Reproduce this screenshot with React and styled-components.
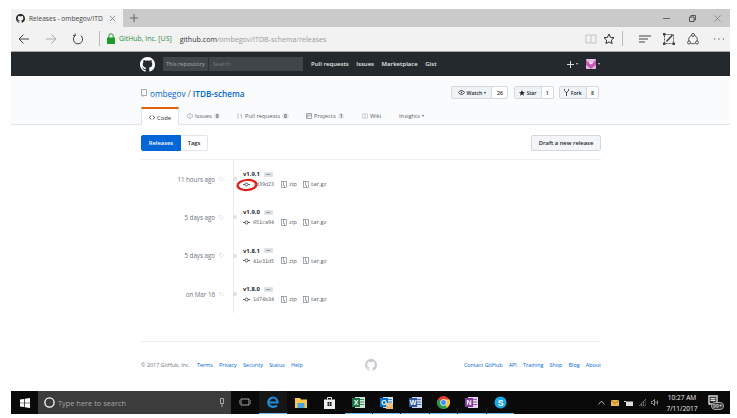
import React from 'react'
import styled, { createGlobalStyle } from 'styled-components'

const Global = createGlobalStyle`
  html, body { margin: 0; padding: 0; background: #fff; }
  body { font-family: "Open Sans", "Noto Sans", sans-serif; color: #24292e; }
  * { box-sizing: border-box; }
`

const Page = styled.div`
  width: 737px;
  height: 418px;
  padding: 9px 7px 4px 11px;
  overflow: hidden;
`
const Win = styled.div`
  height: 405px;
  display: flex;
  flex-direction: column;
`

// browser chrome
const TabStrip = styled.div`
  height: 18px;
  background: #cacaca;
  display: flex;
  align-items: center;
  color: #555;
`
const ActiveTab = styled.div`
  width: 112px;
  height: 18px;
  background: #f2f2f2;
  display: flex;
  align-items: center;
  padding-left: 5px;
  font-size: 6.6px;
  color: #444;
`
const TabTitle = styled.span`
  margin: 0 4px;
  width: 76px;
  overflow: hidden;
  white-space: nowrap;
`
const NewTab = styled.span`
  margin-left: 7px;
  display: flex;
`
const WinButtons = styled.div`
  margin-left: auto;
  width: 67px;
  display: flex;
  justify-content: space-between;
  align-items: center;
  padding-right: 9px;
`
const AddressBar = styled.div`
  height: 25px;
  background: #f2f2f2;
  border-bottom: 1px solid #a9a9a9;
  display: flex;
  align-items: center;
  padding: 0 0 1px 7px;
`
const NavBtn = styled.span`
  display: flex;
  width: 12px;
  margin-right: ${p => p.$gap}px;
`
const Sep = styled.span`
  width: 1px;
  height: 15px;
  background: #bbb;
  margin: ${p => p.$m};
`
const Identity = styled.span`
  font-size: 6.9px;
  color: #2e8b3a;
  margin-left: 4px;
  white-space: nowrap;
`
const Url = styled.span`
  font-size: 7.1px;
  color: #9a9a9a;
  margin-left: 8px;
  white-space: nowrap;
  b { font-weight: 400; color: #333; }
`
const Tools = styled.div`
  margin-left: auto;
  display: flex;
  align-items: center;
  padding-right: 5px;
`
const ToolSlot = styled.span`
  display: flex;
  justify-content: center;
  width: ${p => p.$w}px;
  margin-left: ${p => p.$ml || 0}px;
`

// github header
const TopNav = styled.div`
  height: 24px;
  background: #24292e;
  display: flex;
  align-items: center;
  padding: 0 130px 0 129px;
`
const SearchBox = styled.div`
  width: 140px;
  height: 14px;
  margin-left: 8px;
  background: #40454a;
  border-radius: 1px;
  display: flex;
  align-items: center;
  font-size: 5.6px;
  color: #a9adb1;
`
const Scope = styled.span`
  width: 46px;
  height: 100%;
  padding-left: 3px;
  display: flex;
  align-items: center;
  border-right: 1px solid #2b3035;
  white-space: nowrap;
`
const SearchHint = styled.span`
  margin-left: 4px;
  color: #777c80;
`
const NavLinks = styled.div`
  margin-left: 8px;
  display: flex;
  gap: 7.5px;
  font-size: 6px;
  font-weight: 600;
  color: #e4e6e8;
  white-space: nowrap;
`
const NavRight = styled.div`
  margin-left: auto;
  display: flex;
  align-items: center;
  color: #d8dadc;
`
const Caret = styled.span`
  width: 0;
  height: 0;
  margin-left: ${p => p.$ml ?? 2}px;
  border: 1.5px solid transparent;
  border-top: 2px solid currentColor;
  border-bottom: 0;
  display: inline-block;
  vertical-align: middle;
`
const Avatar = styled.span`
  margin-left: 8px;
  display: flex;
`

const RepoHead = styled.div`
  height: 49px;
  background: #fafbfc;
  border-bottom: 1px solid #e1e4e8;
  padding: 10px 130px 0;
  display: flex;
  flex-direction: column;
`
const RepoRow = styled.div`
  height: 13px;
  display: flex;
  align-items: center;
`
const RepoName = styled.div`
  margin: 1px 0 0 3px;
  font-size: 8.2px;
  color: #586069;
  white-space: nowrap;
  a { color: #0366d6; }
  strong { color: #0366d6; font-weight: 600; }
`
const Actions = styled.div`
  margin: 0 1px 0 auto;
  display: flex;
  gap: 5.3px;
`
const Action = styled.div`
  display: flex;
  height: 13px;
  font-size: 5.2px;
  border: 1px solid #d5d8dc;
  border-radius: 2px;
  background: #fff;
  color: #24292e;
`
const ActionMain = styled.span`
  width: ${p => p.$w}px;
  background: #eff3f6;
  border-right: 1px solid #d5d8dc;
  display: flex;
  align-items: center;
  justify-content: center;
  gap: 1.5px;
  font-weight: 600;
`
const ActionCount = styled.span`
  width: ${p => p.$w}px;
  display: flex;
  align-items: center;
  justify-content: center;
  font-weight: 600;
`
const Tabs = styled.div`
  margin-top: 8px;
  display: flex;
  height: 18px;
`
const Tab = styled.div`
  width: ${p => p.$w}px;
  margin-left: ${p => p.$ml || 0}px;
  display: flex;
  align-items: center;
  justify-content: ${p => (p.$active ? 'center' : 'flex-start')};
  gap: 2px;
  font-size: 5.8px;
  white-space: nowrap;
  color: ${p => (p.$active ? '#24292e' : '#586069')};
  ${p =>
    p.$active &&
    `background:#fff;border-top:2px solid #e36209;border-left:1px solid #e1e4e8;border-right:1px solid #e1e4e8;height:19px;`}
`
const Count = styled.span`
  background: #e6e8ea;
  border-radius: 5px;
  padding: 0 2px;
  font-size: 4.8px;
  font-weight: 600;
  line-height: 6px;
  color: #444;
`

// releases
const Main = styled.div`
  flex: 1;
  padding: 10px 129px 0 130px;
  background: #fff;
  display: flex;
  flex-direction: column;
  position: relative;
`
const SubNav = styled.div`
  height: 25px;
  border-bottom: 1px solid #eaecef;
  display: flex;
  align-items: flex-start;
`
const Seg = styled.span`
  height: 16px;
  width: ${p => p.$w}px;
  display: flex;
  align-items: center;
  justify-content: center;
  font-size: 5.8px;
  font-weight: 600;
  border-radius: ${p => p.$r};
  color: ${p => (p.$on ? '#fff' : '#24292e')};
  background: ${p => (p.$on ? '#0366d6' : '#fff')};
  border: 1px solid ${p => (p.$on ? '#0366d6' : '#e1e4e8')};
  ${p => !p.$on && 'border-left:0;'}
`
const Draft = styled.span`
  margin-left: auto;
  width: 70px;
  height: 16px;
  display: flex;
  align-items: center;
  justify-content: center;
  font-size: 5.8px;
  font-weight: 600;
  background: #f3f5f7;
  border: 1px solid #d5d8dc;
  border-radius: 2px;
`
const Timeline = styled.div`
  width: 200px;
  height: 153px;
  padding-top: 9.5px;
  display: flex;
  flex-direction: column;
  background: linear-gradient(#e9ebed, #e9ebed) no-repeat 92px 0 / 1px 100%;
`
const Release = styled.div`
  flex: 0 0 38.4px;
  display: grid;
  grid-template-columns: 74px 12px 16px 1fr;
  align-items: start;
`
const When = styled.span`
  margin-top: 5px;
  text-align: right;
  font-size: 6.2px;
  color: #6a737d;
  white-space: nowrap;
`
const TagMark = styled.span`
  margin: 7px 0 0 4px;
  display: flex;
`
const Dot = styled.span`
  margin: 7.5px 0 0 6px;
  width: 4px;
  height: 4px;
  border-radius: 50%;
  background: #dfe2e5;
`
const Info = styled.div`
  display: flex;
  flex-direction: column;
`
const Version = styled.div`
  display: flex;
  align-items: center;
  gap: 4px;
  height: 9px;
  font-size: 5.9px;
  font-weight: 700;
  color: #24292e;
`
const More = styled.span`
  width: 9px;
  height: 5px;
  background: #dfe2e5;
  border-radius: 1px;
  font-size: 5px;
  line-height: 2px;
  text-align: center;
  color: #444d56;
`
const Meta = styled.div`
  display: flex;
  align-items: center;
  margin-top: 1.5px;
  height: 8px;
  font-size: 6px;
  color: #586069;
`
const Sha = styled.span`
  font-family: "DejaVu Sans Mono", "Liberation Mono", monospace;
  font-size: 5px;
  margin: 0 6px 0 3px;
  width: 22px;
  white-space: nowrap;
`
const Dl = styled.span`
  display: flex;
  align-items: center;
  gap: 2px;
  margin-right: 6px;
`
const Circle = styled.svg`
  position: absolute;
  left: 225px;
  top: 53px;
`
const Foot = styled.div`
  margin-top: 28px;
  border-top: 1px solid #eaecef;
  padding-top: 17px;
  height: 50px;
  display: grid;
  grid-template-columns: 1fr 12px 1fr;
  align-items: start;
  font-size: 5.4px;
  line-height: 12px;
  color: #6a737d;
  white-space: nowrap;
`
const FootLeft = styled.div`
  display: flex;
  gap: 6.2px;
  a { color: #0366d6; }
  span { margin-right: 0.8px; }
`
const FootRight = styled.div`
  display: flex;
  justify-content: flex-end;
  gap: 6.2px;
  a { color: #0366d6; }
`

// taskbar
const Taskbar = styled.div`
  height: 23px;
  background: #0a0a0a;
  display: flex;
  align-items: center;
  color: #ddd;
`
const StartSlot = styled.span`
  width: 27px;
  display: flex;
  justify-content: center;
`
const SearchBar = styled.div`
  width: 193px;
  height: 23px;
  background: #3c3c3c;
  display: flex;
  align-items: center;
  padding: 0 6px;
  font-size: 7.4px;
  color: #a5a5a5;
`
const SearchText = styled.span`
  margin-left: 3px;
  flex: 1;
`
const TaskIcon = styled.span`
  width: 27.4px;
  height: 23px;
  margin-right: 1px;
  display: flex;
  align-items: center;
  justify-content: center;
  border-bottom: 1.5px solid ${p => (p.$open ? '#76b9ed' : 'transparent')};
  background: ${p => (p.$on ? '#161616' : 'transparent')};
`
const Tray = styled.div`
  margin-left: auto;
  display: flex;
  align-items: center;
  gap: 5.5px;
  padding-right: 6px;
`
const Clock = styled.div`
  font-size: 6.6px;
  line-height: 11px;
  text-align: center;
  color: #eee;
  width: 33px;
  margin: 0 4px 0 1px;
  white-space: nowrap;
`
const Notif = styled.span`
  position: relative;
  width: 16px;
  height: 16px;
  display: flex;
`
const Badge = styled.span`
  position: absolute;
  right: 0;
  bottom: 1px;
  background: #333;
  border: 1px solid #aaa;
  border-radius: 4px;
  padding: 0 1px;
  font-size: 5.4px;
  line-height: 6px;
  color: #fff;
`

const octoPath =
  'M8 0C3.58 0 0 3.58 0 8c0 3.54 2.29 6.53 5.47 7.59.4.07.55-.17.55-.38 0-.19-.01-.82-.01-1.49-2.01.37-2.53-.49-2.69-.94-.09-.23-.48-.94-.82-1.13-.28-.15-.68-.52-.01-.53.63-.01 1.08.58 1.23.82.72 1.21 1.87.87 2.33.66.07-.52.28-.87.51-1.07-1.78-.2-3.64-.89-3.64-3.95 0-.87.31-1.59.82-2.15-.08-.2-.36-1.02.08-2.12 0 0 .67-.21 2.2.82.64-.18 1.32-.27 2-.27s1.36.09 2 .27c1.53-1.04 2.2-.82 2.2-.82.44 1.1.16 1.92.08 2.12.51.56.82 1.27.82 2.15 0 3.07-1.87 3.75-3.65 3.95.29.25.54.73.54 1.48 0 1.07-.01 1.93-.01 2.2 0 .21.15.46.55.38A8.01 8.01 0 0 0 16 8c0-4.42-3.58-8-8-8z'

const Octo = ({ size, color }) => (
  <svg width={size} height={size} viewBox="0 0 16 16" fill={color}>
    <path d={octoPath} />
  </svg>
)

const Line = ({ d, w = 12, h = 12, c = '#555', sw = 1, box = '0 0 12 12' }) => (
  <svg width={w} height={h} viewBox={box} fill="none" stroke={c} strokeWidth={sw}>
    <path d={d} />
  </svg>
)

const CommitIcon = () => (
  <svg width="7" height="5" viewBox="0 0 14 10" fill="none" stroke="#444d56" strokeWidth="1.8">
    <circle cx="7" cy="5" r="3" />
    <path d="M0 5h4M10 5h4" />
  </svg>
)

const ZipIcon = () => (
  <svg width="6" height="7" viewBox="0 0 12 14" fill="none" stroke="#6a737d" strokeWidth="1.2">
    <rect x="1" y="1" width="10" height="12" />
    <path d="M5 1v8M5 9h2v4" />
  </svg>
)

const TagIcon = () => (
  <svg width="5" height="5" viewBox="0 0 10 10" fill="none" stroke="#d1d5da" strokeWidth="1.2">
    <path d="M1 1h4l4 4-4 4-4-4z" />
  </svg>
)

const NoteIcon = () => (
  <svg width="12" height="12" viewBox="0 0 12 12" fill="none" stroke="#444" strokeWidth="0.9">
    <path d="M1.500 1.500h9v9h-9z" strokeDasharray="2 1" />
    <path d="M3.500 8.500 9.500 2" strokeWidth="1.600" />
    <path d="M0 0h2.500v2.500H0zM9.500 9.500H12V12H9.500zM0 9.500h2.500V12H0z" fill="#444" stroke="none" />
  </svg>
)

const ShareIcon = () => (
  <svg width="12" height="12" viewBox="0 0 12 12" fill="#f2f2f2" stroke="#444" strokeWidth="0.9">
    <circle cx="6" cy="6.500" r="4.300" />
    <circle cx="6" cy="2" r="1.500" />
    <circle cx="2" cy="9.500" r="1.500" />
    <circle cx="10" cy="9.500" r="1.500" />
  </svg>
)

const releases = [
  { when: '11 hours ago', tag: 'v1.9.1', sha: '3d39d23' },
  { when: '5 days ago', tag: 'v1.9.0', sha: '051ca94' },
  { when: '5 days ago', tag: 'v1.8.1', sha: '41e31d5' },
  { when: 'on Mar 16', tag: 'v1.8.0', sha: '1d74b34' },
]

const Office = ({ bg, letter, accent, children }) => (
  <svg width="13" height="13" viewBox="0 0 13 13">
    <rect x="3" y="1" width="10" height="11" fill={accent} />
    <path d="M8 3.500h4M8 6h4M8 8.500h4" stroke={bg} strokeWidth=".8" />
    <rect x="0" y="2" width="8" height="9" fill={bg} />
    <text x="4" y="9" fontSize="7" fontFamily="Liberation Sans" fontWeight="700" fill="#fff" textAnchor="middle">
      {letter}
    </text>
    {children}
  </svg>
)

export default function App() {
  return (
    <Page>
      <Global />
      <Win>
        <TabStrip>
          <ActiveTab>
            <Octo size={9} color="#222" />
            <TabTitle>Releases - ombegov/ITD</TabTitle>
            <Line w={7} h={7} box="0 0 8 8" c="#666" sw={0.8} d="M1 1l6 6M7 1l-6 6" />
          </ActiveTab>
          <NewTab>
            <Line w={8} h={8} box="0 0 8 8" c="#666" d="M4 0v8M0 4h8" />
          </NewTab>
          <WinButtons>
            <Line w={7} h={7} box="0 0 7 7" c="#666" d="M0 3.500h7" />
            <Line w={7} h={7} box="0 0 7 7" c="#555" d="M.5 2h4.500v4.500h-4.500zM2 2V.5h4.500V5H5" />
            <Line w={7} h={7} box="0 0 7 7" c="#777" sw={0.7} d="M.5.5l6 6M6.500.5l-6 6" />
          </WinButtons>
        </TabStrip>
        <AddressBar>
          <NavBtn $gap={15}>
            <Line d="M11 6H1M5.500 1.500 1 6l4.500 4.500" c="#444" />
          </NavBtn>
          <NavBtn $gap={15}>
            <Line d="M1 6h10M6.500 1.500 11 6l-4.500 4.500" c="#aaa" />
          </NavBtn>
          <NavBtn $gap={15}>
            <Line d="M3.200 2.600a4.600 4.600 0 1 0 5.600 0M3.200 2.600V.4M3.200 2.600H1" c="#444" />
          </NavBtn>
          <Sep $m="0 7px 0 0" />
          <svg width="8" height="11" viewBox="0 0 8 11">
            <rect x="0" y="4.500" width="8" height="6.500" fill="#1f9a2d" />
            <path d="M1.800 5V3a2.200 2.200 0 0 1 4.400 0v2" fill="none" stroke="#1f9a2d" />
          </svg>
          <Identity>GitHub, Inc. [US]</Identity>
          <Url>
            <b>github.com</b>/ombegov/ITDB-schema/releases
          </Url>
          <Tools>
            <ToolSlot $w={13}>
              <Line c="#c4c4c4" box="0 0 12 12" d="M1 2h4.500l.5 1 .5-1H11v8H1zM6 3v7" />
            </ToolSlot>
            <ToolSlot $w={12} $ml={5.5}>
              <Line c="#333" d="M6 1l1.500 3.300 3.500.4-2.600 2.400.7 3.500L6 8.900l-3.100 1.700.7-3.500L1 4.700l3.500-.4z" />
            </ToolSlot>
            <Sep $m="0 16px 0 6.500px" />
            <ToolSlot $w={12}>
              <Line c="#444" d="M0 3h12M0 6h9M0 9h6" />
            </ToolSlot>
            <ToolSlot $w={12} $ml={12}>
              <NoteIcon />
            </ToolSlot>
            <ToolSlot $w={12} $ml={12.5}>
              <ShareIcon />
            </ToolSlot>
            <ToolSlot $w={12} $ml={14}>
              <Line c="#444" d="M1 6h1.200M5.400 6h1.200M9.800 6H11" />
            </ToolSlot>
          </Tools>
        </AddressBar>
        <TopNav>
          <Octo size={15} color="#fff" />
          <SearchBox>
            <Scope>This repository</Scope>
            <SearchHint>Search</SearchHint>
          </SearchBox>
          <NavLinks>
            <span>Pull requests</span>
            <span>Issues</span>
            <span>Marketplace</span>
            <span>Gist</span>
          </NavLinks>
          <NavRight>
            <Line w={7} h={7} box="0 0 7 7" c="#d8dadc" d="M3.500 0v7M0 3.500h7" />
            <Caret />
            <Avatar>
              <svg width="10" height="10" viewBox="0 0 10 10">
                <rect width="10" height="10" rx="1" fill="#e6bfe3" />
                <path d="M0 1l5 4 5-4v5l-5 4-5-4z" fill="#b3329f" opacity=".7" />
                <path d="M3 3.500l2 1.500 2-1.500" stroke="#fff" fill="none" />
              </svg>
            </Avatar>
            <Caret />
          </NavRight>
        </TopNav>
        <RepoHead>
          <RepoRow>
            <Line w={6} h={8} box="0 0 6 8" c="#a3aab1" d="M.5.500h5v6h-5zM2 6.500V8" />
            <RepoName>
              <a>ombegov</a> / <strong>ITDB-schema</strong>
            </RepoName>
            <Actions>
              <Action>
                <ActionMain $w={40}>
                  <Line w={7} h={5} box="0 0 14 10" c="#24292e" sw={1.800} d="M1 5c3-5 9-5 12 0-3 5-9 5-12 0zM7 3.500v3" />
                  Watch
                  <Caret $ml={0} />
                </ActionMain>
                <ActionCount $w={15}>26</ActionCount>
              </Action>
              <Action>
                <ActionMain $w={27}>
                  <svg width="6" height="6" viewBox="0 0 12 12" fill="#24292e">
                    <path d="M6 0l1.800 4 4.200.4-3.200 2.800 1 4.300L6 9.200 2.200 11.500l1-4.300L0 4.400 4.200 4z" />
                  </svg>
                  Star
                </ActionMain>
                <ActionCount $w={11}>1</ActionCount>
              </Action>
              <Action>
                <ActionMain $w={27}>
                  <Line w={5} h={7} box="0 0 10 14" c="#24292e" sw={1.600} d="M1 0v3c0 2 4 2 4 5v6M9 0v3c0 2-4 2-4 5" />
                  Fork
                </ActionMain>
                <ActionCount $w={11}>8</ActionCount>
              </Action>
            </Actions>
          </RepoRow>
          <Tabs>
            <Tab $active $w={38}>
              <Line w={6} h={5} box="0 0 12 10" c="#24292e" sw={1.600} d="M4 1 1 5l3 4M8 1l3 4-3 4" />
              Code
            </Tab>
            <Tab $w={42} $ml={8}>
              <Line w={6} h={6} box="0 0 12 12" c="#7f8890" d="M6 1a5 5 0 1 0 .01 0zM6 3v4M6 8v1" />
              Issues <Count>9</Count>
            </Tab>
            <Tab $w={61} $ml={8}>
              <Line w={6} h={6} box="0 0 12 12" c="#7f8890" d="M2 1v10M9 11V4H6" />
              Pull requests <Count>0</Count>
            </Tab>
            <Tab $w={48} $ml={8}>
              <Line w={6} h={6} box="0 0 12 12" c="#7f8890" sw={1.500} d="M1 1h10v10H1zM3.500 3v6M6 3v4M8.500 3v3" />
              Projects <Count>1</Count>
            </Tab>
            <Tab $w={29} $ml={8}>
              <Line w={6} h={6} box="0 0 12 12" c="#a3aab1" d="M1 2h10v8H1zM6 2v8" />
              Wiki
            </Tab>
            <Tab $w={30} $ml={8}>
              Insights
              <Caret $ml={0} />
            </Tab>
          </Tabs>
        </RepoHead>
        <Main>
          <SubNav>
            <Seg $on $w={40} $r="2px 0 0 2px">
              Releases
            </Seg>
            <Seg $w={27} $r="0 2px 2px 0">
              Tags
            </Seg>
            <Draft>Draft a new release</Draft>
          </SubNav>
          <Timeline>
            {releases.map(r => (
              <Release key={r.tag}>
                <When>{r.when}</When>
                <TagMark>
                  <TagIcon />
                </TagMark>
                <Dot />
                <Info>
                  <Version>
                    {r.tag}
                    <More>...</More>
                  </Version>
                  <Meta>
                    <CommitIcon />
                    <Sha>{r.sha}</Sha>
                    <Dl>
                      <ZipIcon />
                      zip
                    </Dl>
                    <Dl>
                      <ZipIcon />
                      tar.gz
                    </Dl>
                  </Meta>
                </Info>
              </Release>
            ))}
          </Timeline>
          <Circle width="22" height="14" viewBox="0 0 22 14">
            <ellipse cx="11" cy="7" rx="9.500" ry="5" fill="none" stroke="#e0201b" strokeWidth="2.200" transform="rotate(-4 11 7)" />
          </Circle>
          <Foot>
            <FootLeft>
              <span>© 2017 GitHub, Inc.</span>
              <a>Terms</a>
              <a>Privacy</a>
              <a>Security</a>
              <a>Status</a>
              <a>Help</a>
            </FootLeft>
            <Octo size={12} color="#c6cbd1" />
            <FootRight>
              <a>Contact GitHub</a>
              <a>API</a>
              <a>Training</a>
              <a>Shop</a>
              <a>Blog</a>
              <a>About</a>
            </FootRight>
          </Foot>
        </Main>
        <Taskbar>
          <StartSlot>
            <svg width="10" height="10" viewBox="0 0 10 10" fill="#fff">
              <path d="M0 1.500l4-.6v3.800H0zM4.700.800 10 0v4.700H4.700zM0 5.300h4v3.800l-4-.6zM4.700 5.300H10V10l-5.300-.8z" />
            </svg>
          </StartSlot>
          <SearchBar>
            <svg width="11" height="11" viewBox="0 0 11 11" fill="none" stroke="#fff" strokeWidth="1.300">
              <circle cx="5.500" cy="5.500" r="4.600" />
            </svg>
            <SearchText>Type here to search</SearchText>
            <Line w={6} h={9} box="0 0 6 9" c="#aaa" d="M1.500.500h3v5h-3zM3 6v3" />
          </SearchBar>
          <TaskIcon>
            <Line w={12} h={8} box="0 0 12 8" c="#ccc" sw={0.8} d="M2 1h8v6H2zM0 2v4M12 2v4" />
          </TaskIcon>
          <TaskIcon $on $open>
            <svg width="12" height="12" viewBox="0 0 12 12" fill="none" stroke="#1e8fe0" strokeWidth="2.200">
              <path d="M1.500 6.500h9C10.500 3.500 8.500 1.500 6 1.500S1.300 3.700 1.300 6.500s2.200 4.300 4.700 4.300c1.500 0 3-.4 4-1.200" />
            </svg>
          </TaskIcon>
          <TaskIcon>
            <svg width="12" height="11" viewBox="0 0 12 11">
              <path d="M0 1h5l1 1.500h6V11H0z" fill="#f6c94e" />
              <rect x="2.500" y="6" width="7" height="5" fill="#4aa3df" />
            </svg>
          </TaskIcon>
          <TaskIcon>
            <svg width="11" height="13" viewBox="0 0 11 13">
              <path d="M0 3.500h11V13H0z" fill="#eee" />
              <path d="M3.500 3.500V1.500h4v2" fill="none" stroke="#eee" />
              <path d="M3.500 6h1.800v1.800H3.500zM5.800 6h1.800v1.800H5.800zM3.500 8.300h1.800v1.800H3.500zM5.800 8.300h1.800v1.800H5.800z" fill="#111" />
            </svg>
          </TaskIcon>
          <TaskIcon $open>
            <Office bg="#1e7145" accent="#cfe6d7" letter="X" />
          </TaskIcon>
          <TaskIcon $open>
            <Office bg="#0a6fc2" accent="#cfe3f5" letter="O">
              <path d="M6 7h7v6H6z" fill="#eab66a" />
              <path d="M6 7l3.500 3L13 7" fill="none" stroke="#fff" strokeWidth=".7" />
            </Office>
          </TaskIcon>
          <TaskIcon $open>
            <Office bg="#2b5797" accent="#cbd8ec" letter="W" />
          </TaskIcon>
          <TaskIcon $open>
            <svg width="13" height="13" viewBox="0 0 26 26">
              <circle cx="13" cy="13" r="13" fill="#e33b2e" />
              <path d="M13 13 24.500 19A13 13 0 0 1 7 24.500z" fill="#1e9e4a" />
              <path d="M13 13 7 24.500A13 13 0 0 1 1.500 7z" fill="#1e9e4a" />
              <path d="M13 7h12A13 13 0 0 1 19 24z" fill="#f8c72d" />
              <circle cx="13" cy="13" r="6" fill="#4a8bf0" stroke="#fff" strokeWidth="1.500" />
            </svg>
          </TaskIcon>
          <TaskIcon $open>
            <Office bg="#80399b" accent="#e5d2ee" letter="N" />
          </TaskIcon>
          <TaskIcon $open>
            <svg width="13" height="13" viewBox="0 0 26 26">
              <circle cx="13" cy="13" r="12" fill="#19a9e5" />
              <text x="13" y="19" fontSize="17" fontWeight="700" fontFamily="Liberation Sans" fill="#fff" textAnchor="middle">
                S
              </text>
            </svg>
          </TaskIcon>
          <Tray>
            <Line w={7} h={5} box="0 0 7 5" c="#ccc" sw={0.8} d="M.5 4.500 3.500 1l3 3.500" />
            <svg width="8" height="6" viewBox="0 0 8 6">
              <rect width="8" height="6" fill="#e8b64c" />
              <path d="M0 0l4 3.500L8 0" fill="none" stroke="#7a5a14" strokeWidth=".7" />
            </svg>
            <svg width="9" height="6" viewBox="0 0 9 6" fill="#ddd">
              <path d="M0 1h2v1H0zM2 1.500h7V6H2z" />
            </svg>
            <Line w={7} h={7} box="0 0 7 7" c="#888" sw={0.7} d="M0 7 7 0v7zM2.500 7V4.500M4.500 7V2.500" />
            <Line w={8} h={7} box="0 0 8 7" c="#ccc" sw={0.7} d="M0 2.500h1.500L3.500.500v6L1.500 4.500H0zM5 2.500v2M6.500 1.500v4" />
            <Clock>
              10:27 AM
              <br />
              7/11/2017
            </Clock>
            <Notif>
              <Line w={10} h={11} box="0 0 10 11" c="#ddd" sw={1.400} d="M1 1h8v8H1zM2.500 3.500h5M2.500 5.500h5" />
              <Badge>99+</Badge>
            </Notif>
          </Tray>
        </Taskbar>
      </Win>
    </Page>
  )
}
